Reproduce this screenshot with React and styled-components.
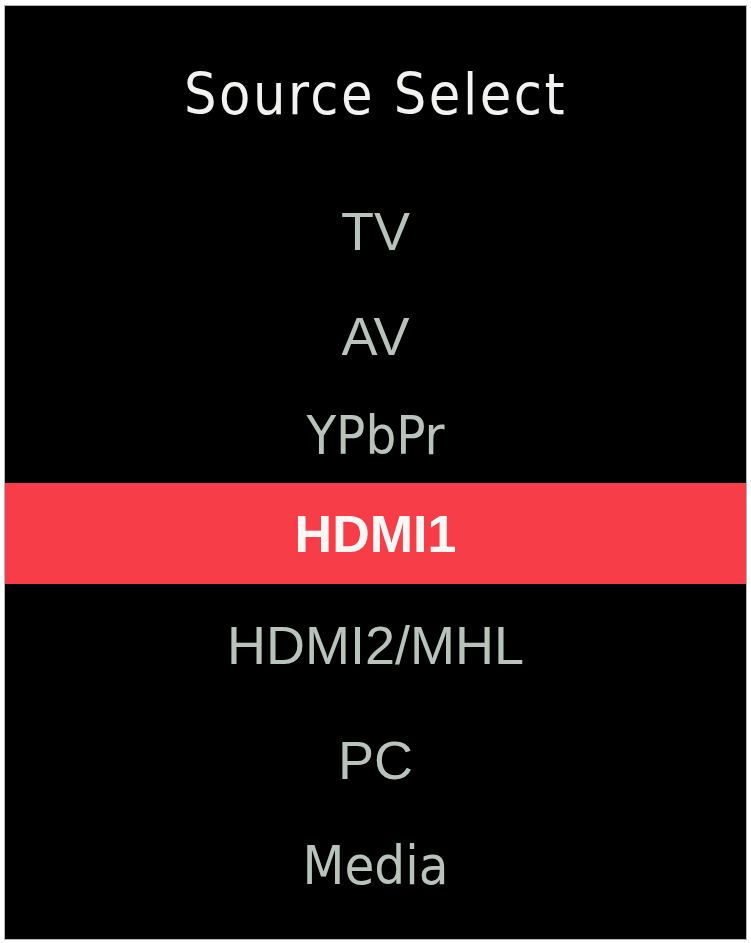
import React from "react";
import styled, { createGlobalStyle } from "styled-components";

const GlobalStyle = createGlobalStyle`
html, body {
    margin: 0;
    padding: 0;
    background: #ffffff;
}
`;

const Page = styled.div`
display: flex;
width: 751px;
height: 943px;
padding: 5px 4px 3px 4px;
box-sizing: border-box;
`;

const Panel = styled.div`
flex: 1;
display: flex;
flex-direction: column;
background: #000000;
border: 1px solid #b5b5b5;
box-sizing: border-box;
`;

const Title = styled.h1`
margin: 0;
height: 172px;
display: flex;
align-items: center;
justify-content: center;
padding-top: 4px;
box-sizing: border-box;
font-family: "DejaVu Sans Condensed", "DejaVu Sans", sans-serif;
font-weight: normal;
font-size: 57px;
letter-spacing: 2.5px;
color: #f2f2f0;
`;

const List = styled.ul`
list-style: none;
margin: 0;
padding: 0;
display: flex;
flex-direction: column;
`;

const Item = styled.li`
display: flex;
align-items: center;
justify-content: center;
height: ${props => props.$height}px;
background: ${props => props.$active ? "#f73e48" : "transparent"};
font-family: ${props => props.$narrow
        ? `"DejaVu Sans Condensed", "DejaVu Sans", sans-serif`
        : `"Liberation Sans", Arial, sans-serif`};
font-size: ${props => props.$active ? 52 : 54}px;
font-weight: ${props => props.$active ? "bold" : "normal"};
line-height: 1;
color: ${props => props.$active ? "#fbf7f5" : "#b7c3bb"};
`;

const sources = [
    { label: "TV", height: 105 },
    { label: "AV", height: 105 },
    { label: "YPbPr", height: 95, narrow: true },
    { label: "HDMI1", height: 101, active: true },
    { label: "HDMI2/MHL", height: 122 },
    { label: "PC", height: 108 },
    { label: "Media", height: 104, narrow: true },
];

const App = () => {
    return (
        <>
            <GlobalStyle />
            <Page>
                <Panel>
                    <Title>Source Select</Title>
                    <List>
                        {sources.map(x => (
                            <Item
                                key={x.label}
                                $height={x.height}
                                $active={x.active}
                                $narrow={x.narrow}
                            >{x.label}</Item>
                        ))}
                    </List>
                </Panel>
            </Page>
        </>
    );
};

export default App;
